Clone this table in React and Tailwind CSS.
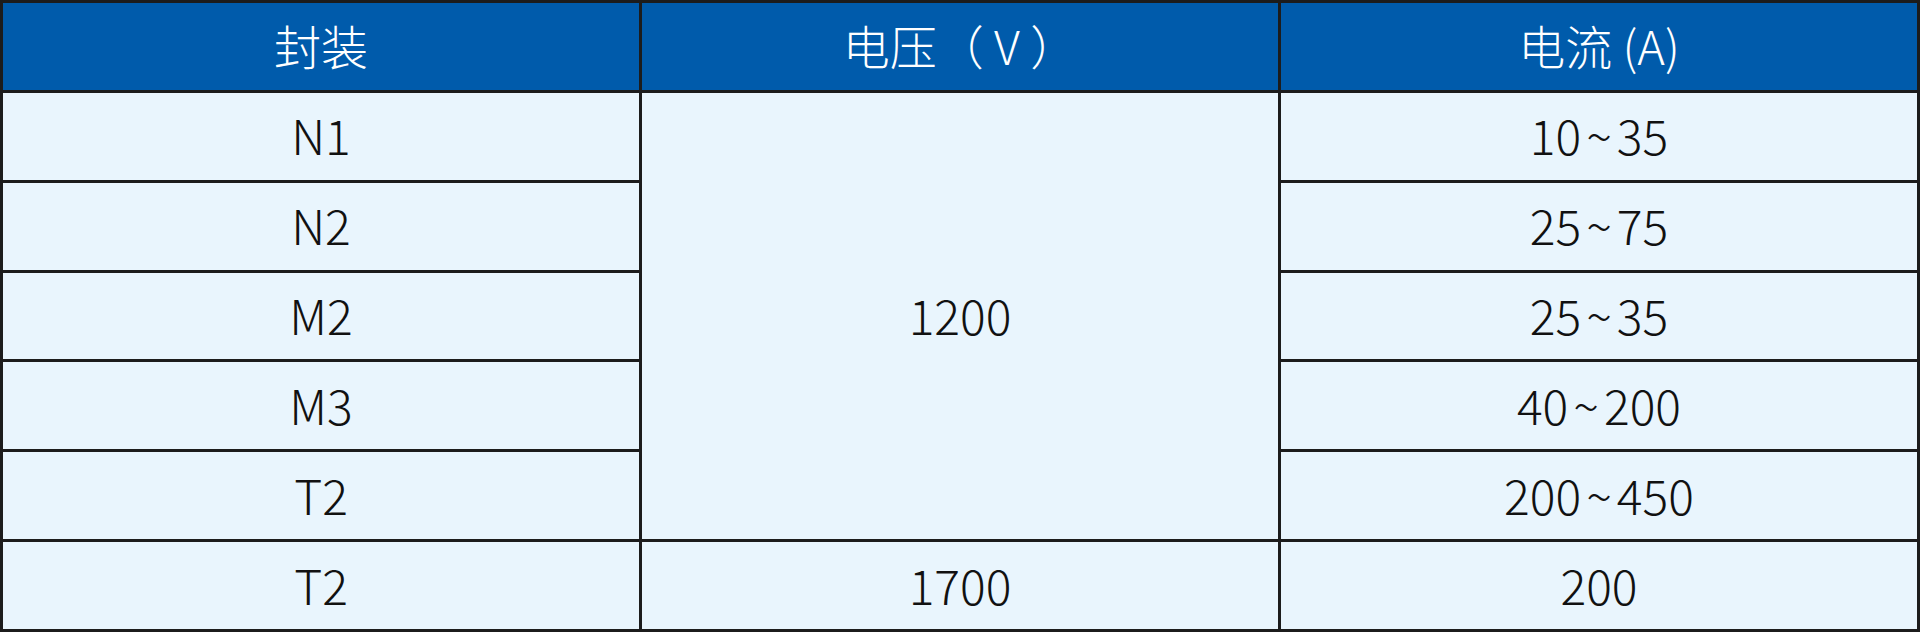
export default function App() {
  const font = { fontFamily: '"Noto Sans CJK SC", "Noto Sans", sans-serif' };
  const head = "bg-[#005bab] text-white flex items-center justify-center font-light text-[47px] whitespace-pre pb-[4px]";
  const cell = "bg-[#e9f5fd] text-[#111] flex items-center justify-center font-light text-[48px] whitespace-pre pb-[4px]";
  const Range = ({ a, b }) => (
    <span>
      {a}
      <span className="inline-block mx-[5px]">~</span>
      {b}
    </span>
  );
  const rows = [
    ["N1", "10", "35"],
    ["N2", "25", "75"],
    ["M2", "25", "35"],
    ["M3", "40", "200"],
    ["T2", "200", "450"],
  ];
  return (
    <div style={font} className="w-[1920px] h-[632px] bg-[#1c1c1c] p-[3px] grid grid-cols-3 grid-rows-7 gap-[3px] leading-none">
      <div className={head}>封装</div>
      <div className={head}>电压（ V ）</div>
      <div className={head}>电流 (A)</div>
      {rows.map((r, i) => [
        <div key={"a" + i} className={cell} style={{ gridColumn: 1, gridRow: i + 2 }}>{r[0]}</div>,
        <div key={"c" + i} className={cell} style={{ gridColumn: 3, gridRow: i + 2 }}>
          <Range a={r[1]} b={r[2]} />
        </div>,
      ])}
      <div className={cell + " col-start-2 row-start-2 row-span-5"}>1200</div>
      <div className={cell + " col-start-1 row-start-7"}>T2</div>
      <div className={cell + " col-start-2 row-start-7"}>1700</div>
      <div className={cell + " col-start-3 row-start-7"}>200</div>
    </div>
  );
}
